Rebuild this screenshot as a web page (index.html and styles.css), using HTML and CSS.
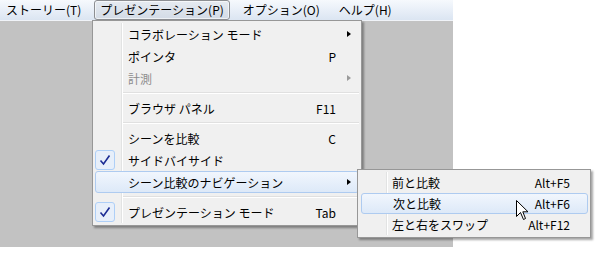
FILE: index.html
```html
<!DOCTYPE html>
<html lang="ja">
<head>
    <meta charset="UTF-8">
    <title>プレゼンテーション メニュー</title>
    <link rel="stylesheet" href="styles.css">
</head>
<body>
    <div class="window">
        <div class="menubar">
            <span class="bar-item">ストーリー(T)</span>
            <span class="bar-item open">プレゼンテーション(P)</span>
            <span class="bar-item">オプション(O)</span>
            <span class="bar-item">ヘルプ(H)</span>
        </div>
        <div class="workspace"></div>
    </div>

    <!-- プレゼンテーション メニュー -->
    <div class="menu main-menu">
        <div class="item"><span class="icon"></span><span class="label">コラボレーション モード</span><span class="key"></span><span class="arrow"></span></div>
        <div class="item"><span class="icon"></span><span class="label">ポインタ</span><span class="key">P</span><span></span></div>
        <div class="item disabled"><span class="icon"></span><span class="label">計測</span><span class="key"></span><span class="arrow"></span></div>
        <div class="sep"></div>
        <div class="item"><span class="icon"></span><span class="label">ブラウザ パネル</span><span class="key">F11</span><span></span></div>
        <div class="sep"></div>
        <div class="item"><span class="icon"></span><span class="label">シーンを比較</span><span class="key">C</span><span></span></div>
        <div class="item"><span class="icon checked"><svg width="12" height="12" viewBox="0 0 12 12"><path d="M1.5 6.5 L4.5 10 L10.5 1.5" fill="none" stroke="#1c2c94" stroke-width="1.6"/></svg></span><span class="label">サイドバイサイド</span><span class="key"></span><span></span></div>
        <div class="item hover"><span class="icon"></span><span class="label">シーン比較のナビゲーション</span><span class="key"></span><span class="arrow"></span></div>
        <div class="sep"></div>
        <div class="item"><span class="icon checked"><svg width="12" height="12" viewBox="0 0 12 12"><path d="M1.5 6.5 L4.5 10 L10.5 1.5" fill="none" stroke="#1c2c94" stroke-width="1.6"/></svg></span><span class="label">プレゼンテーション モード</span><span class="key">Tab</span><span></span></div>
    </div>

    <!-- シーン比較のナビゲーション サブメニュー -->
    <div class="menu sub-menu">
        <div class="item"><span class="icon"></span><span class="label">前と比較</span><span class="key">Alt+F5</span><span></span></div>
        <div class="item hover"><span class="icon"></span><span class="label">次と比較</span><span class="key">Alt+F6</span><span></span></div>
        <div class="item"><span class="icon"></span><span class="label">左と右をスワップ</span><span class="key">Alt+F12</span><span></span></div>
    </div>

    <svg class="cursor" width="13" height="21" viewBox="0 0 13 21">
        <path d="M0.5 0.5 L0.5 16.5 L4.5 12.5 L7.5 19.5 L9.5 18.5 L6.8 11.8 L12 11.8 Z" fill="#fff" stroke="#000" stroke-width="1" stroke-linejoin="miter"/>
    </svg>
</body>
</html>
```

FILE: styles.css
```css
body {
    margin: 0;
    background-color: #fff;
    font-family: "Noto Sans CJK JP", "Noto Sans", sans-serif;
    font-size: 12px;
    color: #000;
    width: 600px;
    height: 256px;
    overflow: hidden;
    position: relative;
}

.window {
    width: 453px;
}

.menubar {
    height: 20px;
    display: flex;
    align-items: center;
    gap: 7px;
    padding-left: 0;
    background: linear-gradient(#f6f9fd, #dbe5f2);
    border-bottom: 1px solid #f0f3f8;
}

.bar-item {
    height: 18px;
    line-height: 18px;
    padding: 0 5px;
    border: 1px solid transparent;
    border-radius: 3px;
    white-space: nowrap;
}

.bar-item.open {
    border-color: #8c8e92;
    background: linear-gradient(#e6ebf1, #d3dbe6);
    box-shadow: inset 0 0 0 1px rgba(255, 255, 255, 0.6);
}

.workspace {
    height: 226px;
    background-color: #c2c2c2;
}

.menu {
    position: absolute;
    background-color: #f0f0f0;
    border: 1px solid #979797;
    padding: 2px;
    box-shadow: 2px 2px 2px rgba(0, 0, 0, 0.35);
}

/* gutter line next to the icon column */
.menu::before {
    content: "";
    position: absolute;
    top: 2px;
    bottom: 2px;
    left: 28px;
    width: 1px;
    background-color: #e2e3e3;
    border-right: 1px solid #fff;
}

.main-menu {
    left: 92px;
    top: 20px;
    width: 264px;
}

.sub-menu {
    left: 357px;
    top: 169px;
    width: 228px;
}

.item {
    position: relative;
    height: 22px;
    display: grid;
    grid-template-columns: 32px 1fr auto 22px;
    align-items: center;
    white-space: nowrap;
    border: 1px solid transparent;
    border-radius: 3px;
    box-sizing: border-box;
}

.sub-menu .item {
    height: 21px;
    grid-template-columns: 31px 1fr auto 17px;
}

.item.disabled {
    color: #8d8d8d;
}

.item.hover {
    border-color: #aecbf0;
    background: linear-gradient(#f1f6fd, #dde9f8);
}

.sub-menu .item.hover {
    margin-left: 1px;
}

.icon {
    height: 100%;
    display: flex;
    align-items: center;
}

.icon.checked {
    justify-content: center;
    width: 20px;
    height: 20px;
    margin-left: -1px;
    box-sizing: border-box;
    border: 1px solid #aecff7;
    border-radius: 3px;
    background-color: #e7effa;
}

.key {
    text-align: right;
}

.arrow {
    justify-self: center;
    width: 0;
    height: 0;
    border-top: 3.5px solid transparent;
    border-bottom: 3.5px solid transparent;
    border-left: 4px solid #000;
    margin-left: 4px;
}

.item.disabled .arrow {
    border-left-color: #9a9a9a;
}

.sep {
    height: 8px;
    margin-left: 27px;
    display: flex;
    align-items: center;
}

.sep::after {
    content: "";
    flex: 1;
    height: 1px;
    background-color: #e0e0e0;
    border-bottom: 1px solid #fff;
}

.cursor {
    position: absolute;
    left: 516px;
    top: 200px;
}
```
